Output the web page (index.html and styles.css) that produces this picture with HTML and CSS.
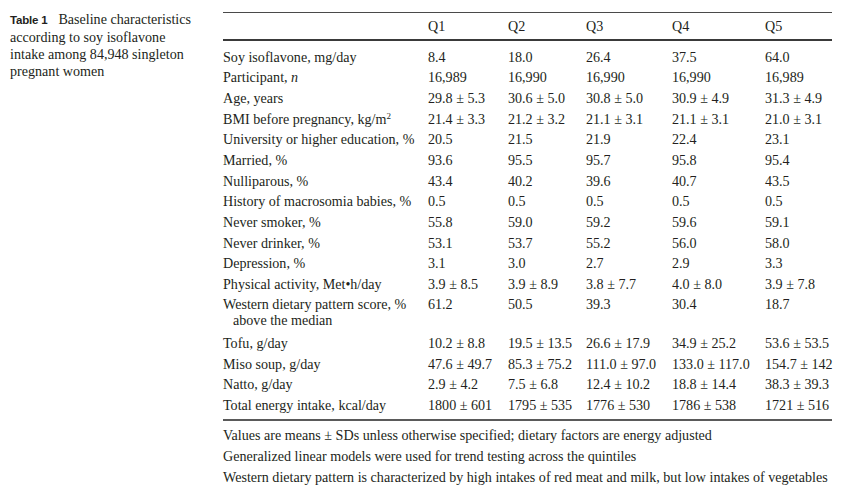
FILE: index.html
```html
<!DOCTYPE html>
<html>
<head>
<meta charset="utf-8">
<link rel="stylesheet" href="styles.css">
</head>
<body>
<div class="page">
  <div class="caption"><span class="label">Table 1</span>Baseline characteristics<br>according to soy isoflavone<br>intake among 84,948 singleton<br>pregnant women</div>
  <div class="content">
    <table class="data">
      <colgroup>
        <col class="c-label"><col class="c-q1"><col class="c-q2"><col class="c-q3"><col class="c-q4"><col class="c-q5">
      </colgroup>
      <thead>
        <tr><th></th><th>Q1</th><th>Q2</th><th>Q3</th><th>Q4</th><th>Q5</th></tr>
      </thead>
      <tbody>
        <tr class="first"><td>Soy isoflavone, mg/day</td><td>8.4</td><td>18.0</td><td>26.4</td><td>37.5</td><td>64.0</td></tr>
        <tr><td>Participant, <i>n</i></td><td>16,989</td><td>16,990</td><td>16,990</td><td>16,990</td><td>16,989</td></tr>
        <tr><td>Age, years</td><td>29.8 ± 5.3</td><td>30.6 ± 5.0</td><td>30.8 ± 5.0</td><td>30.9 ± 4.9</td><td>31.3 ± 4.9</td></tr>
        <tr><td>BMI before pregnancy, kg/m<span class="sup">2</span></td><td>21.4 ± 3.3</td><td>21.2 ± 3.2</td><td>21.1 ± 3.1</td><td>21.1 ± 3.1</td><td>21.0 ± 3.1</td></tr>
        <tr><td>University or higher education, %</td><td>20.5</td><td>21.5</td><td>21.9</td><td>22.4</td><td>23.1</td></tr>
        <tr><td>Married, %</td><td>93.6</td><td>95.5</td><td>95.7</td><td>95.8</td><td>95.4</td></tr>
        <tr><td>Nulliparous, %</td><td>43.4</td><td>40.2</td><td>39.6</td><td>40.7</td><td>43.5</td></tr>
        <tr><td>History of macrosomia babies, %</td><td>0.5</td><td>0.5</td><td>0.5</td><td>0.5</td><td>0.5</td></tr>
        <tr><td>Never smoker, %</td><td>55.8</td><td>59.0</td><td>59.2</td><td>59.6</td><td>59.1</td></tr>
        <tr><td>Never drinker, %</td><td>53.1</td><td>53.7</td><td>55.2</td><td>56.0</td><td>58.0</td></tr>
        <tr><td>Depression, %</td><td>3.1</td><td>3.0</td><td>2.7</td><td>2.9</td><td>3.3</td></tr>
        <tr><td>Physical activity, Met•h/day</td><td>3.9 ± 8.5</td><td>3.9 ± 8.9</td><td>3.8 ± 7.7</td><td>4.0 ± 8.0</td><td>3.9 ± 7.8</td></tr>
        <tr class="tall"><td>Western dietary pattern score, %<span class="cont">above the median</span></td><td>61.2</td><td>50.5</td><td>39.3</td><td>30.4</td><td>18.7</td></tr>
        <tr><td>Tofu, g/day</td><td>10.2 ± 8.8</td><td>19.5 ± 13.5</td><td>26.6 ± 17.9</td><td>34.9 ± 25.2</td><td>53.6 ± 53.5</td></tr>
        <tr><td>Miso soup, g/day</td><td>47.6 ± 49.7</td><td>85.3 ± 75.2</td><td>111.0 ± 97.0</td><td>133.0 ± 117.0</td><td>154.7 ± 142</td></tr>
        <tr><td>Natto, g/day</td><td>2.9 ± 4.2</td><td>7.5 ± 6.8</td><td>12.4 ± 10.2</td><td>18.8 ± 14.4</td><td>38.3 ± 39.3</td></tr>
        <tr class="last"><td>Total energy intake, kcal/day</td><td>1800 ± 601</td><td>1795 ± 535</td><td>1776 ± 530</td><td>1786 ± 538</td><td>1721 ± 516</td></tr>
      </tbody>
    </table>
    <div class="notes">
      <p>Values are means ± SDs unless otherwise specified; dietary factors are energy adjusted</p>
      <p>Generalized linear models were used for trend testing across the quintiles</p>
      <p>Western dietary pattern is characterized by high intakes of red meat and milk, but low intakes of vegetables</p>
    </div>
  </div>
</div>
</body>
</html>
```
FILE: styles.css
```css
html, body {
  margin: 0;
  padding: 0;
  background: #ffffff;
}
body {
  font-family: "Liberation Serif", "Times New Roman", serif;
  font-size: 14.1px;
  color: #231f20;
}
.page {
  display: flex;
  align-items: flex-start;
  padding: 11px 0 0 10px;
}
.caption {
  width: 205px;
  margin-right: 8px;
  line-height: 17px;
  white-space: nowrap;
}
.caption .label {
  font-family: "Liberation Sans", Arial, sans-serif;
  font-weight: bold;
  font-size: 11.5px;
  margin-right: 11px;
  letter-spacing: -0.2px;
}
.content {
  width: 609px;
  margin-top: 1px;
}
.data {
  width: 609px;
  table-layout: fixed;
  border-collapse: collapse;
}
.c-label { width: 205px; }
.c-q1 { width: 80px; }
.c-q2 { width: 78px; }
.c-q3 { width: 86px; }
.c-q4 { width: 93px; }
.c-q5 { width: 67px; }
.data th {
  font-weight: normal;
  text-align: left;
  line-height: 16px;
  padding: 5px 0 5px 0;
  border-top: 1px solid #4a4a4a;
  border-bottom: 2px solid #3a3a3a;
}
.data td {
  text-align: left;
  vertical-align: top;
  line-height: 16px;
  padding: 2.33px 0;
  white-space: nowrap;
}
.data tr.first td {
  padding-top: 7.6px;
}
.data tr.tall td {
  padding-bottom: 4.2px;
}
.data tr.last td {
  padding-bottom: 6px;
  border-bottom: 2px solid #5a5a5a;
}
.cont {
  display: block;
  padding-left: 10px;
}
.sup {
  font-size: 9px;
  vertical-align: 5px;
  line-height: 0;
}
.notes {
  padding-top: 4px;
}
.notes p {
  margin: 0;
  line-height: 21px;
  white-space: nowrap;
}
```
